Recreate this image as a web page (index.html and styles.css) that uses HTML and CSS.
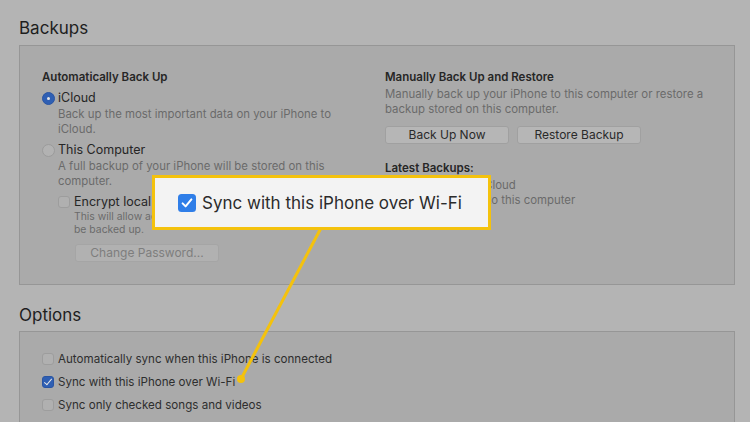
FILE: index.html
```html
<!DOCTYPE html>
<html lang="en">
<head>
  <meta charset="UTF-8">
  <title>Backups and Options</title>
  <link rel="stylesheet" href="styles.css">
</head>
<body>
  <div class="page">
    <h2>Backups</h2>
    <div class="box backups">
      <div class="col">
        <div class="title">Automatically Back Up</div>
        <div class="option">
          <span class="radio on"></span>
          <span>iCloud</span>
        </div>
        <p class="desc">Back up the most important data on your iPhone to<br>iCloud.</p>
        <div class="option">
          <span class="radio"></span>
          <span>This Computer</span>
        </div>
        <p class="desc">A full backup of your iPhone will be stored on this<br>computer.</p>
        <div class="option sub">
          <span class="check"></span>
          <span>Encrypt local backup</span>
        </div>
        <p class="desc small">This will allow account passwords, Health, and HomeKit data to<br>be backed up.</p>
        <button class="btn disabled">Change Password...</button>
      </div>
      <div class="col">
        <div class="title">Manually Back Up and Restore</div>
        <p class="desc flush">Manually back up your iPhone to this computer or restore a<br>backup stored on this computer.</p>
        <div class="buttons">
          <button class="btn wide">Back Up Now</button>
          <button class="btn wide">Restore Backup</button>
        </div>
        <div class="title latest">Latest Backups:</div>
        <p class="desc flush">Today 9:41 AM to iCloud<br>Yesterday 6:12 PM to this computer</p>
      </div>
    </div>

    <h2 class="second">Options</h2>
    <div class="box options">
      <div class="option row">
        <span class="check"></span>
        <span>Automatically sync when this iPhone is connected</span>
      </div>
      <div class="option row">
        <span class="check on"></span>
        <span>Sync with this iPhone over Wi-Fi</span>
      </div>
      <div class="option row">
        <span class="check"></span>
        <span>Sync only checked songs and videos</span>
      </div>
      <div class="option row">
        <span class="check"></span>
        <span>Prefer standard definition videos</span>
      </div>
    </div>
  </div>

  <!-- callout over the screenshot -->
  <svg class="pointer" width="750" height="422" viewBox="0 0 750 422">
    <line x1="321" y1="228" x2="241" y2="379" stroke="#f4c20d" stroke-width="3" stroke-linecap="round"/>
    <circle cx="241" cy="379" r="4" fill="#f4c20d"/>
  </svg>
  <div class="callout">
    <span class="big-check">
      <svg width="18" height="18" viewBox="0 0 18 18">
        <rect x="0" y="0" width="18" height="18" rx="3.5" fill="#2f7ee8"/>
        <path d="M4.6 9.4 L7.6 12.4 L13.4 5.4" fill="none" stroke="#fff" stroke-width="2" stroke-linecap="round" stroke-linejoin="round"/>
      </svg>
    </span>
    <span>Sync with this iPhone over Wi-Fi</span>
  </div>
</body>
</html>
```

FILE: styles.css
```css
* {
  box-sizing: border-box;
}

body {
  margin: 0;
  background: #b4b4b4;
  font-family: 'Inter', 'Liberation Sans', sans-serif;
  color: #262626;
  height: 422px;
  overflow: hidden;
  position: relative;
}

.page {
  padding: 18px 16px 0 19px;
}

h2 {
  margin: 0 0 6px;
  font-size: 17px;
  font-weight: 400;
  line-height: 21px;
  color: #1e1e1e;
}

h2.second {
  margin-top: 20px;
  margin-bottom: 5px;
}

.box {
  background: #aaaaaa;
  border: 1px solid #969696;
  width: 716px;
}

.backups {
  height: 240px;
  display: grid;
  grid-template-columns: 343px 1fr;
  padding: 24px 22px 0;
}

.title {
  font-size: 11.5px;
  font-weight: 600;
  line-height: 14px;
  margin-bottom: 6px;
}

.col:last-child .title:first-child {
  margin-bottom: 3px;
}

.title.latest {
  margin-top: 17px;
  margin-bottom: 3px;
}

.option {
  display: flex;
  align-items: center;
  gap: 3px;
  font-size: 12.5px;
  line-height: 16px;
}

.option.sub {
  margin-left: 16px;
}

.desc {
  margin: 1px 0 6px 16px;
  font-size: 11.4px;
  line-height: 14.5px;
  color: #6a6a6a;
  white-space: nowrap;
}

.desc.flush {
  margin: 0;
}

.desc.small {
  font-size: 10.4px;
  line-height: 13px;
  margin: 0 0 0 32px;
}

.radio {
  width: 13px;
  height: 13px;
  border-radius: 50%;
  border: 1px solid #9b9b9b;
  background: #b2b2b2;
  flex: none;
}

.radio.on {
  background: #2f5fb3;
  border-color: #2a55a3;
  position: relative;
}

.radio.on::after {
  content: "";
  position: absolute;
  left: 4px;
  top: 4px;
  width: 3px;
  height: 3px;
  border-radius: 50%;
  background: #e6e6e6;
}

.check {
  width: 12px;
  height: 12px;
  border-radius: 3px;
  border: 1px solid #9d9d9d;
  background: #b0b0b0;
  flex: none;
  margin-right: 1px;
  position: relative;
}

.check.on {
  background: #2f5fb3;
  border-color: #2a55a3;
}

.check.on::after {
  content: "";
  position: absolute;
  left: 3px;
  top: 0px;
  width: 3px;
  height: 7px;
  border: solid #e8e8e8;
  border-width: 0 1.5px 1.5px 0;
  transform: rotate(40deg);
}

.btn {
  font-family: inherit;
  font-size: 12px;
  color: #2a2a2a;
  background: #b6b6b6;
  border: 1px solid #a0a0a0;
  border-radius: 3px;
  height: 18px;
  padding: 0;
  line-height: 16px;
}

.btn.disabled {
  color: #7e7e7e;
  width: 144px;
  margin: 8px 0 0 33px;
  background: #b1b1b1;
  border-color: #a5a5a5;
}

.buttons {
  display: flex;
  gap: 8px;
  margin-top: 10px;
}

.btn.wide {
  width: 124px;
}

.options {
  height: 120px;
  padding: 19px 22px 0;
  display: flex;
  flex-direction: column;
  gap: 7px;
}

.option.row {
  font-size: 11.6px;
  color: #2e2e2e;
  gap: 3px;
}

.pointer {
  position: absolute;
  left: 0;
  top: 0;
}

.callout {
  position: absolute;
  left: 152px;
  top: 175px;
  width: 339px;
  height: 55px;
  background: #f3f3f3;
  border: 3px solid #f4c20d;
  display: flex;
  align-items: center;
  gap: 6px;
  padding-left: 23px;
  font-size: 17px;
  color: #2b2b2b;
}

.big-check {
  display: flex;
}
```
